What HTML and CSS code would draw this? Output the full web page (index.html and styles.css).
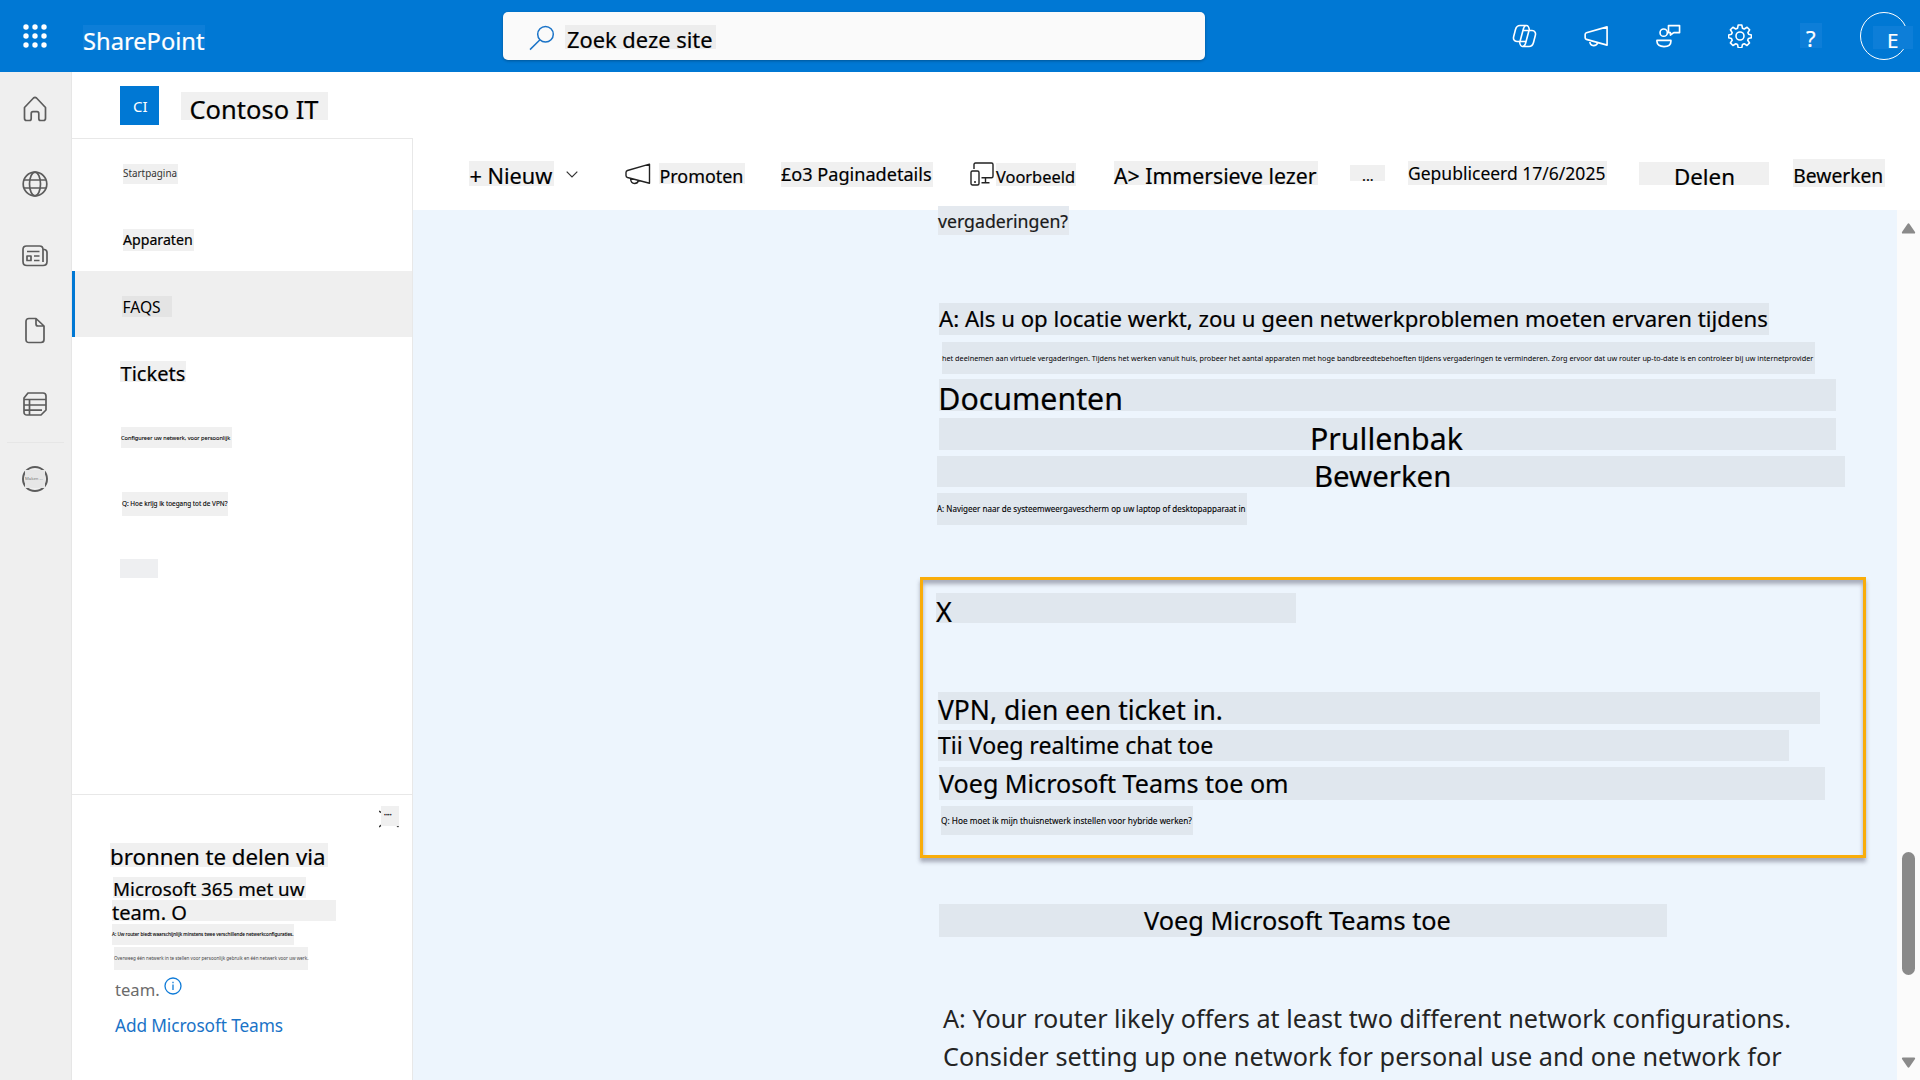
FILE: index.html
```html
<!DOCTYPE html>
<html lang="nl">
<head>
<meta charset="utf-8">
<title>Contoso IT</title>
<link rel="stylesheet" href="styles.css">
</head>
<body>
<header class="suite">
  <svg class="waffle" viewBox="0 0 24 24"><g fill="#fff"><circle cx="3" cy="3" r="2.7"/><circle cx="12" cy="3" r="2.7"/><circle cx="21" cy="3" r="2.7"/><circle cx="3" cy="12" r="2.7"/><circle cx="12" cy="12" r="2.7"/><circle cx="21" cy="12" r="2.7"/><circle cx="3" cy="21" r="2.7"/><circle cx="12" cy="21" r="2.7"/><circle cx="21" cy="21" r="2.7"/></g></svg>
  <span class="tag brand">SharePoint</span>
  <div class="search">
    <svg class="lens" viewBox="0 0 26 26" fill="none" stroke="#1a73c7" stroke-width="1.5"><circle cx="16.5" cy="9.3" r="7.8"/><path d="M11 14.8 1 24.6"/></svg>
    <span class="tag query">Zoek deze site</span>
  </div>
  <nav class="actions">
    <svg viewBox="0 0 24 24" fill="none" stroke="#fff" stroke-width="1.6" stroke-linejoin="round"><path d="M7 17.500H4.500C1.500 17.500.5 15 1.200 12.500L3 5.500C3.800 2.500 5 1.500 7.500 1.500H14C16 1.500 16.500 3 17 6.500M7.500 17.500 11 4.500C11.700 2.200 12.500 1.500 14 1.500M17 6.500h2.500c3 0 4 2.500 3.300 5L21 18.500c-.8 3-2 4-4.500 4H10c-2 0-2.500-1.500-3-5M16.500 6.500 13 19.500c-.7 2.200-1.500 3-3 3M10.300 6.500H17M7 17.500h6.500"/></svg>
    <svg viewBox="0 0 26 24" fill="none" stroke="#fff" stroke-width="1.7" stroke-linejoin="round"><path d="M24 2.500v19L2.500 15.500c-1-.3-1.300-.8-1.300-1.800v-3.200c0-1 .4-1.500 1.300-1.800zM6 17c0 3 1.500 5 4 5 2.200 0 3.700-1.300 4.200-3"/></svg>
    <svg viewBox="0 0 26 24" fill="none" stroke="#fff" stroke-width="1.7" stroke-linejoin="round"><circle cx="8" cy="8.500" r="3.800"/><path d="M1 16.500h14.500v1.200c0 3.500-3 5.300-7.200 5.300S1 21.200 1 17.700zM13 1.200h11.500v7.300h-6L15 11V8.500h-2z"/></svg>
    <svg viewBox="0 0 24 24" fill="none" stroke="#fff" stroke-width="1.6" stroke-linejoin="round"><circle cx="12" cy="12" r="4"/><path d="M10.200 1h3.600l.7 3.300 1.700.7 2.900-1.700 2.500 2.500L19.900 8.600l.7 1.700 2.800.7v2.800l-3 .7-.7 1.700 1.800 2.700-2.500 2.600-2.800-1.800-1.700.7-.7 3.300h-3.600l-.7-3.300-1.700-.7-2.900 1.800-2.500-2.600 1.800-2.700-.7-1.700-2.900-.7v-2.800l2.900-.7.7-1.700-1.800-2.800 2.500-2.500L7.800 5l1.700-.7z"/></svg>
    <span class="tag help">?</span>
    <span class="avatar"><span class="tag initial">E</span></span>
  </nav>
</header>
<div class="frame">
  <aside class="rail">
    <svg class="home" viewBox="0 0 24 26"><path d="M1.500 11.500 10.500 2q1.500-1.300 3 0l9 9.500v10.700q0 2.300-2 2.300h-3q-1.700 0-1.700-2v-4.800q0-2-1.800-2H10q-1.800 0-1.800 2v4.800q0 2-1.700 2h-3q-2 0-2-2.300z"/></svg>
    <svg class="globe" viewBox="0 0 26 26"><circle cx="13" cy="13" r="11.800"/><ellipse cx="13" cy="13" rx="5.500" ry="11.800"/><path d="M2 9h22M2 17h22"/></svg>
    <svg class="news" viewBox="0 0 26 22"><path d="M21 4.500h1.500q2.500.5 2.500 3v9q0 4-4 4H5q-4 0-4-4V4.500q0-3.500 3.500-3.500h13Q21 1 21 4.500V17M5 6.500h12.500M12 11h5.500M12 15.500h5.500M5 11h4v4.500H5z"/></svg>
    <svg class="file" viewBox="0 0 20 26"><path d="M1 4q0-3 3-3h7l8 7.500V22q0 3-3 3H4q-3 0-3-3zM11 1v5.500q0 2 2 2h6"/></svg>
    <svg class="list" viewBox="0 0 24 24"><path d="M5 1h15q3 0 3 3v14l-5 5H4q-3 0-3-3V6zM1 7.500h22M1 13h22M1 18.200h18M6.500 7.500V23"/></svg>
    <i class="rule"></i>
    <span class="ring"><span class="tag">Maken ...</span></span>
  </aside>
  <div class="site">
    <div class="title"><span class="tile">CI</span><h1 class="tag">Contoso IT</h1></div>
    <div class="body">
      <aside class="side">
        <nav class="menu">
          <a><span class="tag m1">Startpagina</span></a>
          <a><span class="tag m2">Apparaten</span></a>
          <a class="on"><span class="tag m3">FAQS</span></a>
          <a><span class="tag m4">Tickets</span></a>
          <a><span class="tag m5">Configureer uw netwerk, voor persoonlijk</span></a>
          <a><span class="tag m6">Q: Hoe krijg ik toegang tot de VPN?</span></a>
          <a><span class="tag m7"></span></a>
        </nav>
        <section class="promo">
          <div class="close"><svg viewBox="0 0 20 18" stroke="#333" stroke-width="1.5"><path d="m0 1 3 2M0 17l2.500-2M17.500 15l2 2"/></svg><span class="tag">••••</span></div>
          <span class="tag p1">bronnen te delen via</span>
          <span class="tag p2">Microsoft 365 met uw</span>
          <span class="tag p3">team. O</span>
          <span class="tag p4">A: Uw router biedt waarschijnlijk minstens twee verschillende netwerkconfiguraties.</span>
          <span class="tag p5">Overweeg één netwerk in te stellen voor persoonlijk gebruik en één netwerk voor uw werk.</span>
          <p class="team">team. <svg viewBox="0 0 18 18" fill="none" stroke="#0f7bd8" stroke-width="1.300"><circle cx="9" cy="9" r="8"/><path d="M9 7.500v5.500M9 4.700v1.500"/></svg></p>
          <a class="add">Add Microsoft Teams</a>
        </section>
      </aside>
      <main>
        <div class="bar">
          <span class="tag b1">+ Nieuw</span>
          <svg class="chev" viewBox="0 0 12 7" fill="none" stroke="#333" stroke-width="1.200"><path d="m.7.7 5.300 5.300L11.300.7"/></svg>
          <svg class="horn" viewBox="0 0 26 22" fill="none" stroke="#222" stroke-width="1.400" stroke-linejoin="round"><path d="M24.500 1.200v19L2.500 14.500Q1 14 1 12.500v-3Q1 8 2.500 7.500zM5.500 15.500c.3 3.500 2 5 4 5s3.500-1 4-3"/></svg>
          <span class="tag b2">Promoten</span>
          <span class="tag b3">£o3 Paginadetails</span>
          <svg class="dev" viewBox="0 0 24 24" fill="none" stroke="#222" stroke-width="1.400"><path d="M4 7V2.500Q4 1 5.500 1h16Q23 1 23 2.500v11.800q0 1.500-1.500 1.500H11.500M15.500 16v4.500M11.500 20.700h8M4 20h2"/><rect x="1" y="9" width="8" height="14" rx="1.500"/></svg>
          <span class="tag b4">Voorbeeld</span>
          <span class="tag b5">A&gt; Immersieve lezer</span>
          <span class="tag b6">...</span>
          <span class="tag b7">Gepubliceerd 17/6/2025</span>
          <span class="tag b8">Delen</span>
          <span class="tag b9">Bewerken</span>
        </div>
        <div class="canvas">
          <article>
            <span class="tag c1">vergaderingen?</span>
            <span class="tag c2">A: Als u op locatie werkt, zou u geen netwerkproblemen moeten ervaren tijdens</span>
            <span class="tag c3">het deelnemen aan virtuele vergaderingen. Tijdens het werken vanuit huis, probeer het aantal apparaten met hoge bandbreedtebehoeften tijdens vergaderingen te verminderen. Zorg ervoor dat uw router up-to-date is en controleer bij uw internetprovider</span>
            <span class="tag c4">Documenten</span>
            <span class="tag c5">Prullenbak</span>
            <span class="tag c6">Bewerken</span>
            <span class="tag c7">A: Navigeer naar de systeemweergavescherm op uw laptop of desktopapparaat in</span>
            <section class="callout">
              <span class="tag d1">X</span>
              <span class="tag d2">VPN, dien een ticket in.</span>
              <span class="tag d3">Tii Voeg realtime chat toe</span>
              <span class="tag d4">Voeg Microsoft Teams toe om</span>
              <span class="tag d5">Q: Hoe moet ik mijn thuisnetwerk instellen voor hybride werken?</span>
            </section>
            <span class="tag c8">Voeg Microsoft Teams toe</span>
            <p class="answer"><span class="l1">A: Your router likely offers at least two different network configurations.</span><br><span class="l2">Consider setting up one network for personal use and one network for</span></p>
          </article>
          <div class="scroll">
            <svg viewBox="0 0 14 11"><path d="M6 1q1-1.300 2 0l5.500 8q.5 1.500-1 1.500h-11Q0 10.500.5 9z" fill="#8a8a8a"/></svg>
            <i class="thumb"></i>
            <svg viewBox="0 0 14 11"><path d="M6 10q1 1.300 2 0l5.500-8q.5-1.500-1-1.500h-11Q0 .5.500 2z" fill="#8a8a8a"/></svg>
          </div>
        </div>
      </main>
    </div>
  </div>
</div>
</body>
</html>
```
FILE: styles.css
```css
* { box-sizing: border-box; }
body { margin: 0; width: 1920px; height: 1080px; overflow: hidden; display: flex; flex-direction: column; background: #fff; color: #000; font-family: "Noto Sans", sans-serif; }
svg { display: block; flex: none; }
h1, p { margin: 0; font-weight: 400; }

.tag { display: block; flex: none; white-space: nowrap; background: #f0f0f0; color: #000; -webkit-text-stroke: .2px; }

/* suite header */
.suite { height: 72px; flex: none; background: #0078d4; display: flex; align-items: flex-start; }
.waffle { width: 24px; height: 24px; margin: 24px 0 0 23px; }
.suite .brand { width: 122px; height: 25px; margin: 25px 0 0 36px; background: #0d7ed8; color: #fff; font-size: 23.7px; line-height: 32px; }
.search { width: 702px; height: 48px; margin: 12px 0 0 298px; border-radius: 5px; background: #fafafa; box-shadow: 0 1px 3px rgba(0,0,0,.3); display: flex; align-items: flex-start; }
.lens { width: 26px; height: 26px; margin: 13px 0 0 26px; }
.query { width: 151px; height: 24px; margin: 13px 0 0 10px; padding-left: 2px; background: #ededed; font-size: 21.85px; line-height: 29px; }
.actions { display: flex; align-items: flex-start; margin-left: 307px; }
.actions svg { width: 25px; height: 24px; margin: 24px 47px 0 0; }
.actions svg:nth-child(4) { width: 24px; }
.actions .help { width: 22px; height: 25px; margin: 23px 0 0 1px; padding-left: 6px; background: #0d7ed8; color: #fff; font-size: 22px; line-height: 31px; }
.avatar { width: 48px; height: 48px; margin: 12px 0 0 38px; border: 1px solid #fff; border-radius: 50%; }
.actions .initial { width: 40px; height: 23px; margin: 13px 0 0 12px; padding-left: 14px; background: #0d7ed8; color: #fff; font-size: 20.5px; line-height: 28px; }

/* app rail */
.frame { flex: 1; min-height: 0; display: flex; }
.rail { width: 72px; flex: none; background: #efefef; border-right: 1px solid #e6e6e6; padding-right: 1px; display: flex; flex-direction: column; align-items: center; }
.rail svg { fill: none; stroke: #5c5c5c; stroke-width: 1.7; stroke-linejoin: round; }
.home { width: 24px; height: 26px; margin-top: 24px; }
.globe { width: 26px; height: 26px; margin-top: 49px; }
.news { width: 26px; height: 22px; margin-top: 48px; }
.file { width: 20px; height: 27px; margin-top: 50px; }
.list { width: 24px; height: 24px; margin-top: 48px; }
.rule { width: 57px; height: 1px; margin-top: 26px; background: #e6e6e6; }
.ring { width: 26px; height: 26px; margin-top: 23px; border: 2px solid #5c5c5c; border-radius: 50%; }
.ring .tag { width: 20px; height: 18px; margin: 2px 0 0 1px; background: #e6e6e6; color: #777; font-size: 4.2px; line-height: 18px; -webkit-text-stroke: 0; }

/* site title */
.site { flex: 1; min-width: 0; display: flex; flex-direction: column; }
.title { height: 66px; flex: none; display: flex; align-items: flex-start; }
.tile { width: 39px; height: 39px; margin: 14px 0 0 48px; padding-left: 13px; background: #0078d4; color: #fff; font-size: 15px; line-height: 41px; }
.title h1 { width: 147px; height: 28px; margin: 20px 0 0 22px; padding-left: 8.5px; font-size: 25.5px; line-height: 34.4px; }
.body { flex: 1; min-height: 0; display: flex; }

/* site navigation */
.side { width: 341px; flex: none; border: solid #e8e8e8; border-width: 1px 1px 0 0; display: flex; flex-direction: column; }
.menu { height: 655px; flex: none; }
.menu a { height: 66px; display: flex; align-items: flex-start; padding-left: 51px; }
.menu .on { background: #efefef; border-left: 3px solid #0078d4; padding-left: 47px; }
.m1 { width: 55px; height: 20px; margin-top: 25px; color: #333; font-size: 9.9px; line-height: 19.4px; -webkit-text-stroke: 0; }
.m2 { width: 71px; height: 22px; margin-top: 24px; font-size: 14.15px; line-height: 22px; }
.menu .m3 { width: 50px; height: 21px; margin-top: 25px; text-indent: .5px; background: #e4e4e4; font-size: 15.6px; line-height: 23px; -webkit-text-stroke: 0; }
.m4 { width: 66px; height: 21px; margin: 24px 0 0 -3px; text-indent: .6px; font-size: 20px; line-height: 26px; }
.m5 { width: 111px; height: 21px; margin: 24px 0 0 -2px; font-size: 5.6px; line-height: 22px; -webkit-text-stroke: .1px; }
.m6 { width: 106px; height: 24px; margin: 23px 0 0 -1px; font-size: 6.4px; line-height: 24px; -webkit-text-stroke: .1px; }
.menu .m7 { width: 38px; height: 19px; margin: 24px 0 0 -3px; background: #eeeff1; }
.promo { flex: 1; border-top: 1px solid #e8e8e8; padding-left: 38px; }
.close { display: flex; margin: 11px 0 0 269px; }
.close svg { width: 20px; height: 18px; margin: 4px -18px 0 0; }
.close .tag { width: 18px; height: 20px; padding-left: 3px; font-size: 5px; line-height: 18px; }
.p1 { width: 218px; height: 24px; margin-top: 15px; font-size: 22.25px; line-height: 27px; }
.p2 { width: 193px; height: 21px; margin: 10px 0 0 3px; font-size: 18.8px; line-height: 25.5px; }
.p3 { width: 224px; height: 21px; margin: 2px 0 0 2px; font-size: 20.1px; line-height: 25px; }
.p4 { width: 182px; height: 21px; margin: 3px 0 0 2px; font-size: 4.64px; line-height: 20.8px; -webkit-text-stroke: .1px; }
.p5 { width: 194px; height: 23px; margin: 2px 0 0 4px; color: #444; font-size: 4.55px; line-height: 22.6px; -webkit-text-stroke: 0; }
.team { display: flex; gap: 4px; margin: 7px 0 0 5px; height: 26px; color: #6b6b6b; font-size: 16.6px; line-height: 26px; }
.team svg { width: 18px; height: 18px; }
.add { display: block; margin: 10px 0 0 5px; color: #1a73c7; font-size: 17.3px; letter-spacing: -.12px; line-height: 26px; white-space: nowrap; }

/* command bar */
main { flex: 1; min-width: 0; display: flex; flex-direction: column; }
.bar { height: 72px; flex: none; display: flex; align-items: flex-start; }
.b1 { width: 85px; height: 25px; margin: 23px 0 0 56px; text-indent: .5px; font-size: 21.7px; line-height: 30px; }
.chev { width: 12px; height: 7px; margin: 33px 0 0 12px; }
.horn { width: 26px; height: 22px; margin: 25px 0 0 47px; }
.b2 { width: 86px; height: 21px; margin: 25px 0 0 8px; padding-left: .5px; font-size: 17.9px; line-height: 26px; }
.b3 { width: 152px; height: 25px; margin: 24px 0 0 36px; font-size: 18.1px; line-height: 25px; }
.dev { width: 24px; height: 24px; margin: 24px 0 0 37px; }
.b4 { width: 80px; height: 23px; margin: 25px 0 0 2px; font-size: 16.4px; line-height: 28px; }
.b5 { width: 204px; height: 24px; margin: 23px 0 0 38px; font-size: 21.25px; line-height: 30px; }
.b6 { width: 35px; height: 16px; margin: 27px 0 0 32px; padding-left: 12px; font-size: 14.5px; line-height: 20px; }
.b7 { width: 199px; height: 24px; margin: 23px 0 0 23px; font-size: 17.5px; line-height: 24.5px; -webkit-text-stroke: .1px; }
.b8 { width: 130px; height: 23px; margin: 24px 0 0 32px; padding-left: 35px; font-size: 22.3px; line-height: 29px; }
.b9 { width: 92px; height: 28px; margin: 21px 0 0 24px; text-indent: .3px; font-size: 19.25px; line-height: 33.5px; }

/* page canvas */
.canvas { flex: 1; min-height: 0; display: flex; background: #edf5fd; }
article { flex: 1; min-width: 0; padding-left: 507px; }
article .tag { background: #e0e7ee; }
article .c1 { width: 131px; height: 29px; margin: -4px 0 0 18px; background: #e4e9ef; color: #1a1a1a; font-size: 17.7px; line-height: 30.4px; }
.c2 { width: 830px; height: 32px; margin: 68px 0 0 19px; font-size: 22.2px; line-height: 32.2px; }
.c3 { width: 873px; height: 32px; margin: 7px 0 0 22px; font-size: 7.27px; line-height: 33.5px; -webkit-text-stroke: 0; }
.c4 { width: 897px; height: 32px; margin: 5px 0 0 19px; text-indent: -.7px; font-size: 30.3px; line-height: 40px; }
.c5 { width: 897px; height: 32px; margin: 7px 0 0 19px; padding-left: 371px; font-size: 30.3px; line-height: 41px; }
.c6 { width: 908px; height: 31px; margin: 6px 0 0 17px; padding-left: 377px; font-size: 29.4px; line-height: 40px; }
.c7 { width: 310px; height: 32px; margin: 6px 0 0 17px; font-size: 8.02px; line-height: 32px; -webkit-text-stroke: .1px; }
.callout { width: 946px; height: 281px; margin-top: 52px; padding: 13px 0 0 13px; border: 3px solid #f9ad0a; box-shadow: 0 4px 4px rgba(70,70,90,.42), inset 0 4px 4px rgba(70,70,90,.42); }
.d1 { width: 360px; height: 30px; font-size: 27px; line-height: 37.5px; }
.d2 { width: 882px; height: 32px; margin: 69px 0 0 2px; font-size: 26.45px; line-height: 37.5px; }
.d3 { width: 851px; height: 31px; margin: 6px 0 0 2px; font-size: 23.1px; line-height: 31.4px; }
.d4 { width: 886px; height: 33px; margin: 6px 0 0 3px; font-size: 25.1px; line-height: 33px; }
.d5 { width: 252px; height: 29px; margin: 6px 0 0 5px; font-size: 8.25px; line-height: 29px; -webkit-text-stroke: .1px; }
.c8 { width: 728px; height: 33px; margin: 46px 0 0 19px; padding-left: 205px; font-size: 25.3px; line-height: 33px; }
.answer { margin: 62px 0 0 23px; color: #242424; font-size: 25.2px; line-height: 38px; white-space: nowrap; }
.l2 { letter-spacing: .05px; }

/* scrollbar */
.scroll { width: 23px; flex: none; background: #fbfbfb; display: flex; flex-direction: column; align-items: center; padding: 13px 0 12px; }
.scroll svg { width: 15px; height: 11px; }
.thumb { width: 13px; height: 123px; margin: 618px 0 auto; border-radius: 7px; background: #8a8a8a; }
```
